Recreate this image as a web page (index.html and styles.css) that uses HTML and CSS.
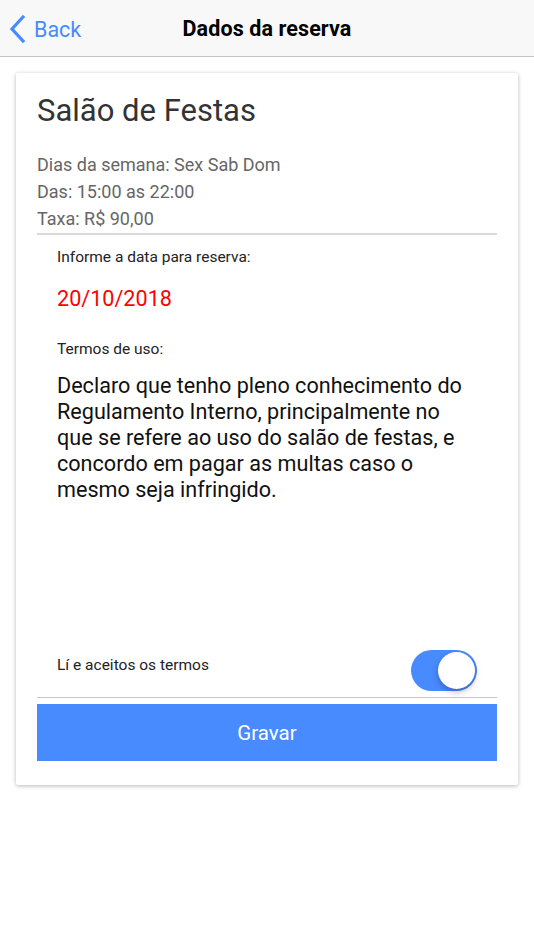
FILE: index.html
```html
<!DOCTYPE html>
<html lang="pt-BR">
<head>
	<meta charset="UTF-8">
	<title>Dados da reserva</title>
	<link rel="stylesheet" href="styles.css">
</head>
<body>
	<div class="header">
		<a href="#" class="back">
			<svg width="18" height="28" viewBox="0 0 18 28">
				<path d="M14 2 L3 14 L14 26" fill="none" stroke="#488aff" stroke-width="3.2" stroke-linecap="square"/>
			</svg>
			<span>Back</span>
		</a>
		<h2>Dados da reserva</h2>
	</div>
	<div class="content">
		<div class="card">
			<h1 class="title">Salão de Festas</h1>
			<div class="info">
				<p>Dias da semana: Sex Sab Dom</p>
				<p>Das: 15:00 as 22:00</p>
				<p>Taxa: R$ 90,00</p>
			</div>
			<div class="form">
				<p class="label">Informe a data para reserva:</p>
				<p class="date">20/10/2018</p>
				<p class="label terms-label">Termos de uso:</p>
				<p class="terms">Declaro que tenho pleno conhecimento do Regulamento Interno, principalmente no que se refere ao uso do salão de festas, e concordo em pagar as multas caso o mesmo seja infringido.</p>
			</div>
			<div class="accept">
				<span>Lí e aceitos os termos</span>
				<div class="toggle"><div class="knob"></div></div>
			</div>
			<button class="save">Gravar</button>
		</div>
	</div>
</body>
</html>
```

FILE: styles.css
```css
*{
	margin: 0;
	padding: 0;
	box-sizing: border-box;
}
body{
	font-family: Roboto, "Noto Sans", sans-serif;
	background-color: #fff;
	color: #222;
}
.header{
	position: relative;
	height: 57px;
	background-color: #f8f8f8;
	border-bottom: 1px solid #c4c4c4;
	display: flex;
	align-items: center;
	justify-content: center;
}
.header>h2{
	font-size: 21.5px;
	font-weight: bold;
	color: #000;
	letter-spacing: 0.1px;
}
.back{
	position: absolute;
	left: 9px;
	top: 15px;
	display: flex;
	align-items: center;
	text-decoration: none;
	color: #488aff;
	font-size: 21.5px;
}
.back>svg{
	margin-right: 7px;
}
.content{
	padding: 16px;
}
.card{
	background-color: #fff;
	box-shadow: 0 1px 4px rgba(0,0,0,.28);
	border-radius: 2px;
	padding: 20px 21px 24px;
}
.title{
	font-size: 31px;
	font-weight: normal;
	line-height: 36px;
	color: #333;
}
.info{
	margin-top: 22px;
	padding-bottom: 1px;
	border-bottom: 2px solid #d9d9d9;
}
.info>p{
	font-size: 18px;
	line-height: 27px;
	color: #666;
}
.form{
	padding: 12px 20px 0;
}
.label{
	font-size: 15.5px;
	line-height: 20px;
	color: #222;
}
.date{
	margin-top: 19px;
	font-size: 21.6px;
	line-height: 26px;
	color: #f00;
}
.terms-label{
	margin-top: 27px;
}
.terms{
	margin-top: 14px;
	margin-bottom: 138px;
	font-size: 21.6px;
	line-height: 26px;
	color: #111;
}
.accept{
	display: flex;
	justify-content: space-between;
	align-items: flex-start;
	height: 57px;
	padding: 0 20px;
	border-bottom: 1px solid #c8c8c8;
}
.accept>span{
	padding-top: 14px;
	font-size: 15.5px;
	line-height: 20px;
}
.toggle{
	position: relative;
	margin-top: 9px;
	width: 66px;
	height: 41px;
	border-radius: 21px;
	background-color: #488aff;
}
.knob{
	position: absolute;
	right: 2px;
	top: 2px;
	width: 37px;
	height: 37px;
	border-radius: 50%;
	background-color: #fff;
	box-shadow: 0 3px 6px rgba(0,0,0,.25);
}
.save{
	display: block;
	width: 100%;
	height: 57px;
	margin-top: 6px;
	border: none;
	background-color: #488aff;
	color: #fff;
	font-family: Roboto, "Noto Sans", sans-serif;
	font-size: 20.5px;
}
```
